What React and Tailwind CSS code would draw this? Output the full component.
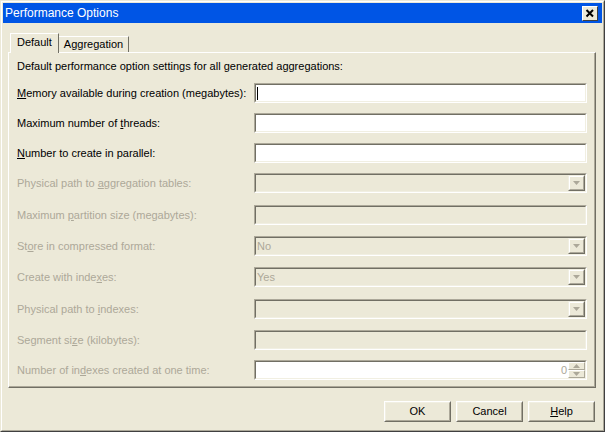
const font = { fontFamily: '"Liberation Sans", Arial, sans-serif' };

function Arrow({ up }) {
  return (
    <svg width="7" height="4" viewBox="0 0 7 4" className="block">
      {up ? <path d="M3.5 0 L7 4 L0 4 Z" fill="#aca899" /> : <path d="M0 0 L7 0 L3.5 4 Z" fill="#aca899" />}
    </svg>
  );
}

function DropButton() {
  return (
    <div className="h-[16px] w-[17px] border border-t-[#f1efe2] border-l-[#f1efe2] border-r-[#716f64] border-b-[#716f64]">
      <div className="flex h-full w-full items-center justify-center border border-t-white border-l-white border-r-[#aca899] border-b-[#aca899] bg-[#ece9d8]">
        <Arrow />
      </div>
    </div>
  );
}

function Spinner() {
  return (
    <div className="flex h-[16px] w-[17px] flex-col">
      {[true, false].map((up) => (
        <div
          key={String(up)}
          className="flex h-[8px] w-full items-center justify-center border border-t-white border-l-white border-r-[#aca899] border-b-[#aca899] bg-[#ece9d8]"
        >
          <Arrow up={up} />
        </div>
      ))}
    </div>
  );
}

function Field({ kind, value, white, caret }) {
  return (
    <div className="h-[20px] w-[333px] border border-t-[#aca899] border-l-[#aca899] border-r-white border-b-white">
      <div
        className={`flex h-full w-full items-center border border-t-[#716f64] border-l-[#716f64] border-r-[#f1efe2] border-b-[#f1efe2] ${
          white ? 'bg-white' : 'bg-[#ece9d8]'
        }`}
      >
        {caret && <span className="ml-[1px] block h-[13px] w-px bg-black" />}
        <span className="flex-1 pl-[1px] text-[11px] leading-none text-[#aca899]">{kind === 'spin' ? '' : value}</span>
        {kind === 'spin' && <span className="pr-[1px] text-[11px] leading-none text-[#aca899]">0</span>}
        {kind === 'combo' && <DropButton />}
        {kind === 'spin' && <Spinner />}
      </div>
    </div>
  );
}

const rows = [
  { pre: '', key: 'M', post: 'emory available during creation (megabytes):', enabled: true, caret: true, mt: 'mt-0' },
  { pre: 'Maximum number of ', key: 't', post: 'hreads:', enabled: true, mt: 'mt-[10px]' },
  { pre: '', key: 'N', post: 'umber to create in parallel:', enabled: true, mt: 'mt-[10px]' },
  { pre: 'Physical path to ', key: 'a', post: 'ggregation tables:', kind: 'combo', mt: 'mt-[10px]' },
  { pre: 'Maximum ', key: 'p', post: 'artition size (megabytes):', mt: 'mt-[12px]' },
  { pre: 'St', key: 'o', post: 're in compressed format:', kind: 'combo', value: 'No', mt: 'mt-[11px]' },
  { pre: 'Create with inde', key: 'x', post: 'es:', kind: 'combo', value: 'Yes', mt: 'mt-[11px]' },
  { pre: 'Physical path to ', key: 'i', post: 'ndexes:', kind: 'combo', mt: 'mt-[12px]' },
  { pre: 'Segment si', key: 'z', post: 'e (kilobytes):', mt: 'mt-[11px]' },
  { pre: 'Number of in', key: 'd', post: 'exes created at one time:', kind: 'spin', white: true, mt: 'mt-[10px]' },
];

function Button({ children }) {
  return (
    <div className="h-[21px] w-[67px] border border-t-white border-l-white border-r-[#716f64] border-b-[#716f64]">
      <div className="flex h-full w-full items-center justify-center border border-t-[#f1efe2] border-l-[#f1efe2] border-r-[#aca899] border-b-[#aca899] bg-[#ece9d8] text-[11px] text-black">
        {children}
      </div>
    </div>
  );
}

export default function App() {
  return (
    <div style={font} className="h-[432px] w-[605px] border border-t-[#ece9d8] border-l-[#ece9d8] border-r-[#404040] border-b-[#404040]">
      <div className="flex h-full w-full flex-col border border-t-white border-l-white border-r-[#aca899] border-b-[#aca899] bg-[#ece9d8] p-px">
        <div className="flex h-[20px] items-center justify-between bg-[#0055e5] pl-[2px] pr-[4px]">
          <span className="text-[12px] leading-none text-white">Performance Options</span>
          <div className="h-[15px] w-[16px] border border-t-white border-l-white border-r-[#404040] border-b-[#404040] bg-[#ece9d8]">
            <svg width="14" height="13" viewBox="0 0 14 13" className="block">
              <path d="M3.5 3 L10 9.5 M10 3 L3.5 9.5" stroke="#000" strokeWidth="2" />
            </svg>
          </div>
        </div>

        <div className="flex flex-col pl-[5px] pr-[6px] pt-[10px]">
          <div className="relative z-10 flex items-end pl-[2px]">
            <div className="-mb-px flex h-[20px] items-center border border-b-0 border-t-white border-l-white border-r-[#716f64] bg-[#ece9d8] px-[6px] pb-[2px] text-[11px]">
              Default
            </div>
            <div className="flex h-[16px] items-center border border-b-0 border-t-white border-l-0 border-r-[#716f64] px-[5px] text-[11px]">
              Aggregation
            </div>
          </div>
          <div className="h-[336px] border border-t-white border-l-white border-r-[#716f64] border-b-[#716f64]">
            <div className="h-full border-r border-b border-r-[#aca899] border-b-[#aca899] pl-[8px] pr-[7px] pt-[7px]">
              <div className="text-[11px] leading-[13px] text-black">
                Default performance option settings for all generated aggregations:
              </div>
              <div className="mt-[10px] flex flex-col">
                {rows.map((r) => (
                  <div key={r.post} className={`flex h-[20px] items-center justify-between ${r.mt}`}>
                    <span className={`text-[11px] leading-none ${r.enabled ? 'text-black' : 'text-[#aca899]'}`}>
                      {r.pre}
                      <span className="underline underline-offset-1">{r.key}</span>
                      {r.post}
                    </span>
                    <Field kind={r.kind} value={r.value} white={r.enabled || r.white} caret={r.caret} />
                  </div>
                ))}
              </div>
            </div>
          </div>
        </div>

        <div className="mt-[13px] flex justify-end gap-[5px] pr-[7px]">
          <Button>OK</Button>
          <Button>Cancel</Button>
          <Button>
            <span>
              <span className="underline underline-offset-1">H</span>elp
            </span>
          </Button>
        </div>
      </div>
    </div>
  );
}
